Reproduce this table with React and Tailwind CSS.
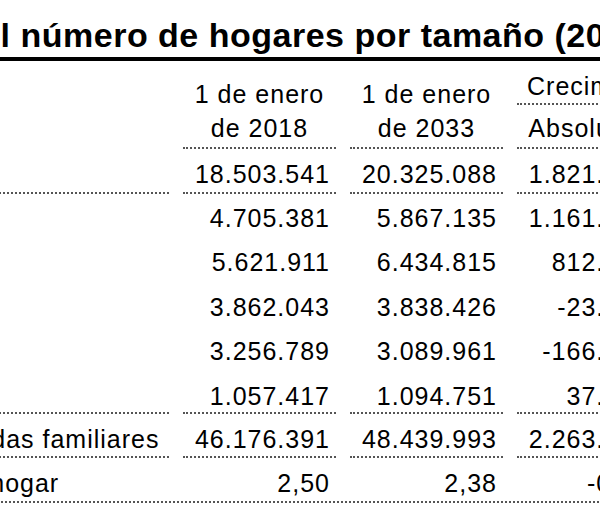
import React from 'react';

const line = 'border-b-2 border-dotted border-[#555]';

const rows = [
  { label: 'Total hogares', a: '18.503.541', b: '20.325.088', abs: '1.821.547', rel: '9,84', cell: `pt-[11px] pb-[4px] ${line}` },
  { label: '1 persona', a: '4.705.381', b: '5.867.135', abs: '1.161.754', rel: '24,69', cell: 'pt-[10px] pb-[6.4px]' },
  { label: '2 personas', a: '5.621.911', b: '6.434.815', abs: '812.904', rel: '14,46', cell: 'pt-[10px] pb-[6.4px]' },
  { label: '3 personas', a: '3.862.043', b: '3.838.426', abs: '-23.617', rel: '-0,61', cell: 'pt-[10px] pb-[6.4px]' },
  { label: '4 personas', a: '3.256.789', b: '3.089.961', abs: '-166.828', rel: '-5,12', cell: 'pt-[10px] pb-[6.4px]' },
  { label: '5 o más personas', a: '1.057.417', b: '1.094.751', abs: '37.334', rel: '3,53', cell: `pt-[10px] pb-[2.4px] ${line}` },
  { label: 'Personas en viviendas familiares', a: '46.176.391', b: '48.439.993', abs: '2.263.602', rel: '4,90', cell: `pt-[11px] pb-[3.5px] ${line}` },
  { label: 'Tamaño medio del hogar', a: '2,50', b: '2,38', abs: '-0,12', rel: '-4,80', cell: 'pt-[11px] pb-[4px]', full: true },
];

const grid = 'grid grid-cols-[407px_153px_153px_132px_130px] gap-x-[14px]';

const Row = ({ row }) => (
  <div className={`${grid} ${row.full ? line : ''}`}>
    <div className={`${row.cell} leading-[28px]`}>{row.label}</div>
    <div className={`${row.cell} leading-[28px] text-right pr-[6px]`}>{row.a}</div>
    <div className={`${row.cell} leading-[28px] text-right pr-[6px]`}>{row.b}</div>
    <div className={`${row.cell} leading-[28px] text-right`}>{row.abs}</div>
    <div className={`${row.cell} leading-[28px] text-right pr-[20px]`}>{row.rel}</div>
  </div>
);

export default function App() {
  return (
    <div className="w-[600px] h-[527px] overflow-hidden bg-white text-black font-['Liberation_Sans',Arial,sans-serif]">
      <div className="ml-[-238px] w-[1100px]">
        <h1 className="pl-[21px] pt-[15px] pb-[1px] text-[34px] font-bold leading-[41px] tracking-[0.5px] whitespace-nowrap border-b-4 border-black">
          Evolución del número de hogares por tamaño (2018-2033)
        </h1>

        <div className="text-[25px] tracking-[1px] whitespace-nowrap">
          <div className={grid}>
            <div />
            <div className={`pt-[16px] pb-[2px] leading-[34px] text-center ${line}`}>
              1 de enero
              <br />
              de 2018
            </div>
            <div className={`pt-[16px] pb-[2px] leading-[34px] text-center ${line}`}>
              1 de enero
              <br />
              de 2033
            </div>
            <div className="col-span-2 flex flex-col">
              <div className={`mt-[8px] pl-[10px] leading-[34px] ${line}`}>Crecimiento</div>
              <div className="mt-[6px] grid grid-cols-[132px_130px] gap-x-[14px]">
                <div className={`pb-[2px] pr-[4px] leading-[34px] text-center ${line}`}>Absoluto</div>
                <div className={`pb-[2px] leading-[34px] text-center ${line}`}>Relativo (%)</div>
              </div>
            </div>
          </div>

          {rows.map((row) => (
            <Row key={row.label} row={row} />
          ))}
        </div>
      </div>
    </div>
  );
}
